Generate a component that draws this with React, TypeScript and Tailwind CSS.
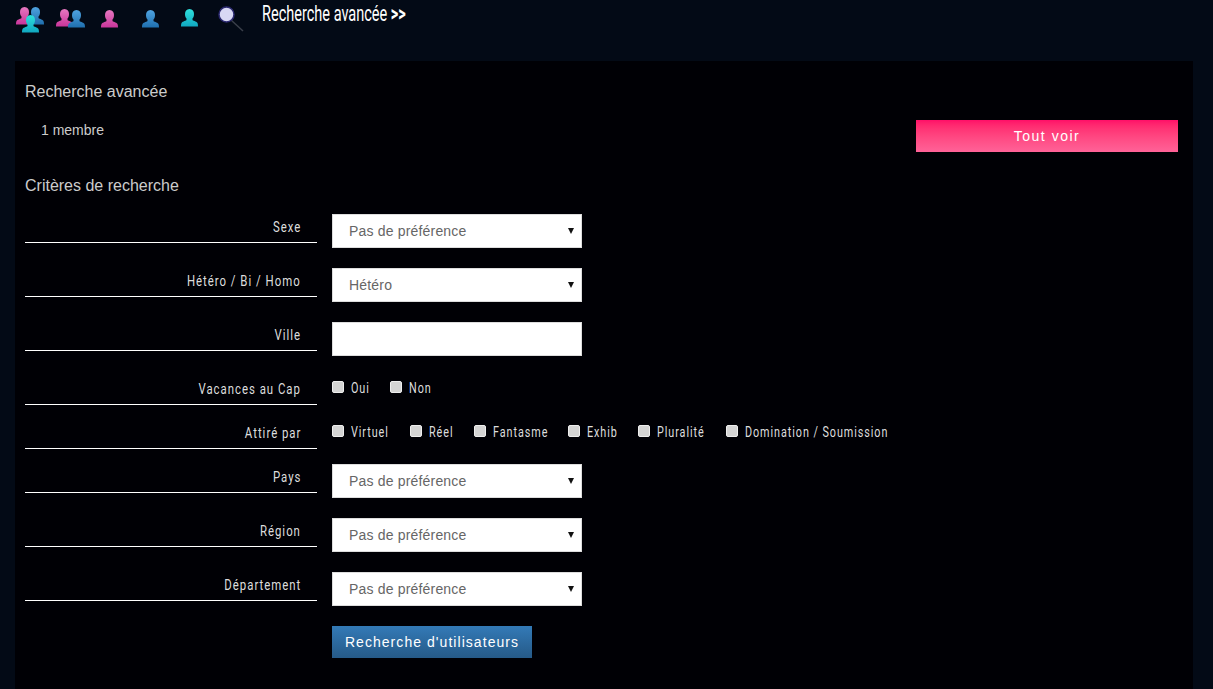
const narrow = { fontFamily: '"Roboto", "Liberation Sans", sans-serif' };

function Person({ from, to, x = 0, y = 0, id }: { from: string; to: string; x?: number; y?: number; id: string }) {
  return (
    <g transform={`translate(${x} ${y})`}>
      <defs>
        <linearGradient id={id} x1="0" y1="0" x2="0" y2="1">
          <stop offset="0" stopColor={from} />
          <stop offset="1" stopColor={to} />
        </linearGradient>
      </defs>
      <path
        d="M8.500 0c3 0 4.500 2.200 4.500 5 0 2-.6 3.500-1.500 4.600v1.400c0 .8 3.800 1.200 4.800 2.800.6 1 .7 2.300.7 3.700H0c0-1.400.1-2.700.7-3.700 1-1.600 4.800-2 4.800-2.800V9.600C4.600 8.500 4 7 4 5c0-2.800 1.500-5 4.500-5z"
        fill={`url(#${id})`}
      />
    </g>
  );
}

function TopIcons() {
  return (
    <div className="flex items-start">
      <svg width="30" height="34" className="ml-[16px] mt-[6px]">
        <Person id="a1" from="#e678c0" to="#c9359a" x="0" y="1" />
        <Person id="a2" from="#4fa3e0" to="#1f6fae" x="11" y="1" />
        <Person id="a3" from="#2fe0dc" to="#10a8c0" x="6" y="9" />
      </svg>
      <svg width="30" height="26" className="ml-[10px] mt-[9px]">
        <Person id="b1" from="#e678c0" to="#c9359a" x="0" y="0" />
        <Person id="b2" from="#4fa3e0" to="#1f6fae" x="12" y="1" />
      </svg>
      <svg width="18" height="22" className="ml-[14px] mt-[10px]">
        <Person id="c1" from="#e678c0" to="#c9359a" x="1" y="0" />
      </svg>
      <svg width="18" height="22" className="ml-[23px] mt-[10px]">
        <Person id="d1" from="#4fa3e0" to="#1f6fae" x="1" y="0" />
      </svg>
      <svg width="18" height="22" className="ml-[21px] mt-[9px]">
        <Person id="e1" from="#2fe0dc" to="#10a8c0" x="1" y="0" />
      </svg>
      <svg width="30" height="28" className="ml-[19px] mt-[5px]">
        <line x1="14" y1="15" x2="26" y2="26" stroke="#3a3f4a" strokeWidth="1.500" />
        <circle cx="9.500" cy="9.500" r="7.500" fill="#d8d8f4" stroke="#2c2a70" strokeWidth="1.500" />
      </svg>
      <span
        className="ml-[15px] inline-block origin-left scale-x-[0.66] whitespace-nowrap text-[22px] leading-[28px] text-white"
        style={narrow}
      >
        Recherche avancée <b>&gt;&gt;</b>
      </span>
    </div>
  );
}

function Label({ text }: { text: string }) {
  return (
    <div className="flex h-[29px] w-[292px] shrink-0 justify-end border-b border-white pr-[16px]">
      <span
        className="inline-block origin-right scale-x-[0.76] whitespace-nowrap text-[15px] leading-[26px] tracking-[1.300px] text-[#dddddd]"
        style={narrow}
      >
        {text}
      </span>
    </div>
  );
}

function Select({ value }: { value: string }) {
  return (
    <div className="relative ml-[15px] h-[34px] w-[250px]">
      <select
        defaultValue={value}
        className="h-full w-full appearance-none border border-[#dddddd] bg-white pl-[16px] text-[14px] tracking-[0.18px] text-[#666666]"
      >
        <option>{value}</option>
      </select>
      <svg width="6" height="6" className="absolute right-[8px] top-[14px]">
        <path d="M0 0h6L3 6z" fill="#111111" />
      </svg>
    </div>
  );
}

function Check({ text, width }: { text: string; width: string }) {
  return (
    <label className={`flex items-start ${width}`}>
      <input
        type="checkbox"
        className="mx-0 mt-[5px] mr-[1px] h-[12px] w-[12px] shrink-0 appearance-none rounded-[2px] border border-[#eeeeee] bg-[#d4d4d4]"
      />
      <span
        className="ml-[6px] inline-block origin-left scale-x-[0.72] whitespace-nowrap text-[15px] leading-[24px] tracking-[1.300px] text-[#dddddd]"
        style={narrow}
      >
        {text}
      </span>
    </label>
  );
}

export default function App() {
  return (
    <div
      className="h-[689px] overflow-hidden bg-[#030a16]"
      style={{ fontFamily: '"Liberation Sans", Arial, sans-serif' }}
    >
      <div className="h-[61px]">
        <TopIcons />
      </div>
      <div className="mx-[20px] ml-[15px] h-[628px] bg-[#000005] pl-[10px] pr-[15px] pt-[21px]">
        <h2 className="text-[16px] leading-[20px] text-[#cccccc]">Recherche avancée</h2>
        <div className="flex justify-between">
          <p className="ml-[16px] mt-[19px] text-[14px] leading-[18px] text-[#cccccc]">1 membre</p>
          <button className="mt-[18px] h-[32px] w-[262px] bg-gradient-to-b from-[#ff0d68] to-[#ff6298] text-[14px] tracking-[1.500px] text-white">
            Tout voir
          </button>
        </div>
        <h2 className="mt-[24px] text-[16px] leading-[20px] text-[#cccccc]">Critères de recherche</h2>

        <div className="mt-[18px] flex h-[54px] items-start">
          <Label text="Sexe" />
          <Select value="Pas de préférence" />
        </div>
        <div className="flex h-[54px] items-start">
          <Label text="Hétéro / Bi / Homo" />
          <Select value="Hétéro" />
        </div>
        <div className="flex h-[54px] items-start">
          <Label text="Ville" />
          <input className="ml-[15px] h-[34px] w-[250px] border border-[#dddddd] bg-white" />
        </div>
        <div className="flex h-[44px] items-start">
          <Label text="Vacances au Cap" />
          <div className="ml-[15px] flex">
            <Check text="Oui" width="w-[58px]" />
            <Check text="Non" width="w-[58px]" />
          </div>
        </div>
        <div className="flex h-[44px] items-start">
          <Label text="Attiré par" />
          <div className="ml-[15px] flex">
            <Check text="Virtuel" width="w-[78px]" />
            <Check text="Réel" width="w-[64px]" />
            <Check text="Fantasme" width="w-[94px]" />
            <Check text="Exhib" width="w-[70px]" />
            <Check text="Pluralité" width="w-[88px]" />
            <Check text="Domination / Soumission" width="w-[160px]" />
          </div>
        </div>
        <div className="flex h-[54px] items-start">
          <Label text="Pays" />
          <Select value="Pas de préférence" />
        </div>
        <div className="flex h-[54px] items-start">
          <Label text="Région" />
          <Select value="Pas de préférence" />
        </div>
        <div className="flex h-[54px] items-start">
          <Label text="Département" />
          <Select value="Pas de préférence" />
        </div>
        <button className="ml-[307px] h-[32px] w-[200px] bg-gradient-to-b from-[#337ab7] to-[#265a88] text-[14px] font-medium tracking-[1.050px] text-white">
          Recherche d'utilisateurs
        </button>
      </div>
    </div>
  );
}
